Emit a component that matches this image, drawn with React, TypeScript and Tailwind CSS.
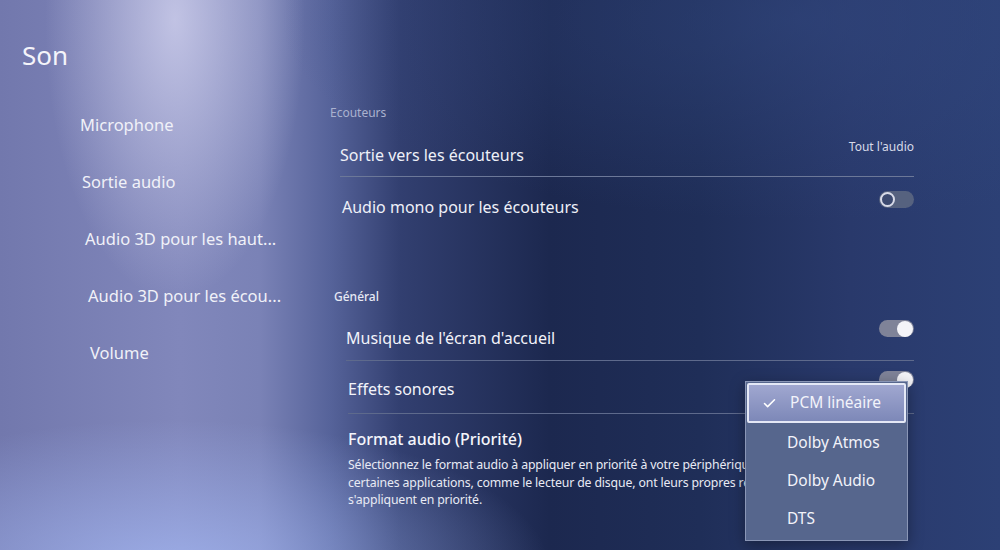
import { Check } from "lucide-react";

const NAV = [
  { label: "Microphone", indent: "pl-[80px]" },
  { label: "Sortie audio", indent: "pl-[82px]" },
  { label: "Audio 3D pour les haut...", indent: "pl-[85px]" },
  { label: "Audio 3D pour les écou...", indent: "pl-[88px]" },
  { label: "Volume", indent: "pl-[90px]" },
];

const FORMATS = ["PCM linéaire", "Dolby Atmos", "Dolby Audio", "DTS"];

function Toggle({ on }: { on: boolean }) {
  if (on) {
    return (
      <div className="w-[35px] h-[17px] rounded-full bg-[#7f8398] flex items-center justify-end pr-[1px]">
        <div className="w-[16px] h-[16px] rounded-full bg-[#f4f4f8]" />
      </div>
    );
  }
  return (
    <div className="w-[35px] h-[17px] rounded-full bg-[#56627f] flex items-center pl-[1px]">
      <div className="w-[15px] h-[15px] rounded-full border-2 border-[#d8dbe8] bg-[#3c4a70]" />
    </div>
  );
}

export default function App() {
  return (
    <div
      className="relative w-[1000px] h-[550px] overflow-hidden bg-[#213260] text-white"
      style={{ fontFamily: "'Noto Sans', 'Open Sans', sans-serif" }}
    >
      {/* backdrop glows */}
      <div className="absolute inset-0 pointer-events-none bg-[linear-gradient(90deg,#7278ad_0%,#8187bb_18%,#7a82b6_26%,#56639a_33%,#323f70_40%,#1c284f_55%,#1f2e58_70%,#29396b_85%,#2c4075_100%)]" />
      <div className="absolute inset-0 pointer-events-none bg-[radial-gradient(ellipse_130px_280px_at_175px_20px,rgba(220,220,245,0.7),transparent)]" />
      <div className="absolute inset-0 pointer-events-none bg-[radial-gradient(ellipse_380px_150px_at_170px_570px,rgba(165,185,245,0.75),transparent)]" />
      <div className="absolute inset-0 pointer-events-none bg-[radial-gradient(ellipse_520px_200px_at_800px_20px,rgba(50,72,128,0.55),transparent)]" />

      <div className="relative flex h-full">
        {/* left column */}
        <div className="w-[330px] shrink-0 pt-[38px]">
          <h1 className="pl-[22px] text-[26px] leading-[34px] text-[#f4f4fa]">Son</h1>
          <ul className="mt-[25px] flex flex-col">
            {NAV.map((n) => (
              <li
                key={n.label}
                className={`${n.indent} h-[57px] flex items-center text-[16.5px] text-[#f0f1f8]`}
              >
                {n.label}
              </li>
            ))}
          </ul>
        </div>

        {/* settings column */}
        <div className="w-[584px] pt-[104px] flex flex-col">
          <div className="text-[12px] text-[#aab2cf] leading-[18px]">Ecouteurs</div>

          <div className="ml-[10px] pt-[21px] pb-[9px] flex items-start justify-between border-b border-[#6c7898]">
            <span className="text-[16px] leading-[24px] text-[#eef0f8]">Sortie vers les écouteurs</span>
            <span className="text-[12px] leading-[18px] text-[#d6dae8] -mt-[5px]">Tout l'audio</span>
          </div>

          <div className="ml-[12px] h-[60px] flex items-start justify-between">
            <span className="text-[16px] leading-[24px] text-[#eef0f8] mt-[18px]">
              Audio mono pour les écouteurs
            </span>
            <div className="mt-[14px]">
              <Toggle on={false} />
            </div>
          </div>

          <div className="ml-[4px] mt-[51px] text-[12px] font-medium text-[#e6e9f4] leading-[18px]">
            Général
          </div>

          <div className="ml-[16px] h-[55px] flex items-start justify-between border-b border-[#5e6a8c]">
            <span className="text-[16px] leading-[24px] text-[#f2f3fa] mt-[20px]">
              Musique de l'écran d'accueil
            </span>
            <div className="mt-[14px]">
              <Toggle on />
            </div>
          </div>

          <div className="ml-[18px] h-[53px] flex items-start justify-between border-b border-[#5e6a8c]">
            <span className="text-[16px] leading-[24px] text-[#f2f3fa] mt-[16px]">Effets sonores</span>
            <div className="mt-[10px]">
              <Toggle on />
            </div>
          </div>

          <div className="ml-[18px] pt-[14px]">
            <div className="text-[16px] font-medium text-[#f4f5fb] leading-[22px]">Format audio (Priorité)</div>
            <p className="mt-[6px] text-[12.3px] leading-[17.5px] text-[#e8eaf4] tracking-[-0.15px] whitespace-nowrap">
              Sélectionnez le format audio à appliquer en priorité à votre périphérique de sortie.
              <br />
              certaines applications, comme le lecteur de disque, ont leurs propres réglages qui
              <br />
              s'appliquent en priorité.
            </p>
          </div>
        </div>
      </div>

      {/* audio format picker */}
      <div className="absolute left-[745px] top-[381px] w-[163px] pb-[2px] bg-[#56668d] border border-[#8a96b6] shadow-[0_4px_14px_rgba(0,0,0,0.35)]">
        <ul className="flex flex-col">
          {FORMATS.map((f, i) => (
            <li
              key={f}
              className={
                i === 0
                  ? "h-[40px] m-[1px] flex items-center bg-[linear-gradient(180deg,#a0a7d0,#7d88b8)] border-2 border-[#e4e8f6] rounded-[2px]"
                  : "h-[38px] flex items-center"
              }
            >
              <span className="w-[41px] flex justify-center">
                {i === 0 && <Check size={15} strokeWidth={2.5} className="text-white" />}
              </span>
              <span className="text-[15.5px] text-[#f2f3fa]">{f}</span>
            </li>
          ))}
        </ul>
      </div>
    </div>
  );
}
